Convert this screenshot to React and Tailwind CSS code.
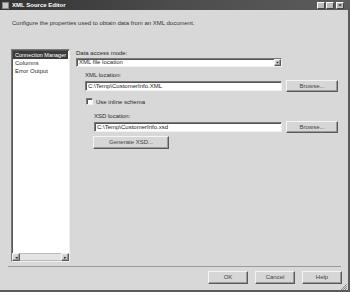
import React from "react";

const raised =
  "bg-[#d6d6d6] border border-t-[#f4f4f4] border-l-[#f4f4f4] border-r-[#5a5a5a] border-b-[#5a5a5a] shadow-[inset_-1px_-1px_0_#9a9a9a]";
const sunken =
  "bg-white border border-t-[#7a7a7a] border-l-[#7a7a7a] border-r-[#f0f0f0] border-b-[#f0f0f0] shadow-[inset_1px_1px_0_#555]";

const Btn = ({ children, className = "" }) => (
  <div className={`${raised} flex items-center justify-center text-[6px] text-[#444] ${className}`}>
    {children}
  </div>
);

const Field = ({ value, width }) => (
  <div className={`${sunken} h-[10px] ${width} flex items-center px-[2px] text-[6px] text-[#222] overflow-hidden whitespace-nowrap`}>
    {value}
  </div>
);

export default function App() {
  return (
    <div
      className="w-[350px] h-[292px] flex flex-col bg-[#d8d8d8] border-r-2 border-b-2 border-[#5a5a5a] overflow-hidden text-[#2a2a2a]"
      style={{ fontFamily: "'Liberation Sans', Arial, sans-serif" }}
    >
      {/* title bar */}
      <div className="h-[10px] shrink-0 flex items-center bg-gradient-to-r from-[#333] via-[#4c4c4c] to-[#5c5c5c] pl-[2px] pr-[4px]">
        <div className="w-[7px] h-[7px] bg-[#c8c8c8] border border-[#888]" />
        <span className="ml-[3px] text-[6px] font-bold text-white leading-none">XML Source Editor</span>
        <div className="ml-auto flex gap-[1px]">
          <div className="w-[8px] h-[7px] bg-[#bdbdbd] border border-t-white border-l-white border-r-[#444] border-b-[#444]" />
          <div className="w-[8px] h-[7px] bg-[#bdbdbd] border border-t-white border-l-white border-r-[#444] border-b-[#444]" />
          <div className="ml-[1px] w-[8px] h-[7px] bg-[#bdbdbd] border border-t-white border-l-white border-r-[#444] border-b-[#444] flex items-center justify-center text-[6px] leading-none font-bold text-[#222]">
            ×
          </div>
        </div>
      </div>

      <div className="mt-[9px] ml-[12px] h-[8px] text-[6px] leading-[8px] text-[#333]">
        Configure the properties used to obtain data from an XML document.
      </div>

      {/* main */}
      <div className="mt-[22px] ml-[11px] flex h-[213px] shrink-0">
        <div className={`${sunken} w-[59px] h-full flex flex-col`}>
          <div className="flex-1 pt-[1px] px-[1px] text-[6px] leading-[8px]">
            <div className="bg-[#3c3c3c] text-white whitespace-nowrap overflow-hidden pl-[2px] text-[5.5px]">Connection Manager</div>
            <div className="pl-[2px]">Columns</div>
            <div className="pl-[2px]">Error Output</div>
          </div>
          <div className="h-[8px] flex bg-[#e4e4e4]">
            <div className={`${raised} w-[8px] h-full flex items-center justify-center text-[5px] leading-none`}>◂</div>
            <div className="flex-1 border-y border-[#bbb]" />
            <div className={`${raised} w-[8px] h-full flex items-center justify-center text-[5px] leading-none`}>▸</div>
          </div>
        </div>

        <div className="ml-[6px] flex flex-col text-[6px]">
          <div className="h-[8px] leading-[8px]">Data access mode:</div>
          <div className={`${sunken} mt-[1px] h-[9px] w-[206px] flex items-center pl-[2px]`}>
            <span className="flex-1">XML file location</span>
            <div className={`${raised} w-[7px] h-full flex items-center justify-center text-[4px] leading-none`}>▼</div>
          </div>

          <div className="ml-[9px] flex flex-col">
            <div className="mt-[4px] h-[8px] leading-[8px]">XML location:</div>
            <div className="mt-[1px] h-[12px] flex items-center">
              <Field value="C:\Temp\CustomerInfo.XML" width="w-[197px]" />
              <Btn className="ml-[4px] w-[52px] h-[12px]">Browse...</Btn>
            </div>

            <div className="mt-[6px] h-[7px] flex items-center">
              <div className={`${sunken} ml-[1px] w-[7px] h-[7px]`} />
              <span className="ml-[3px] leading-none">Use inline schema</span>
            </div>

            <div className="ml-[9px] flex flex-col">
              <div className="mt-[7px] h-[8px] leading-[8px]">XSD location:</div>
              <div className="mt-[1px] h-[12px] flex items-center">
                <Field value="C:\Temp\CustomerInfo.xsd" width="w-[188px]" />
                <Btn className="ml-[4px] w-[52px] h-[12px]">Browse...</Btn>
              </div>
              <Btn className="mt-[3px] -ml-[1px] w-[76px] h-[13px]">Generate XSD...</Btn>
            </div>
          </div>
        </div>
      </div>

      <div className="mt-[4px] ml-[8px] w-[333px] h-[2px] border-t border-[#9a9a9a] border-b-white" />

      <div className="mt-[4px] flex justify-end pr-[6px] gap-[7px]">
        <Btn className="w-[40px] h-[13px]">OK</Btn>
        <Btn className="w-[40px] h-[13px]">Cancel</Btn>
        <Btn className="w-[40px] h-[13px]">Help</Btn>
      </div>

      <div className="mt-auto flex justify-end">
        <svg width="8" height="6" viewBox="0 0 8 6">
          <path d="M7 0 L1 6 M7 2 L3 6 M7 4 L5 6" stroke="#777" strokeWidth="0.8" />
        </svg>
      </div>
    </div>
  );
}
